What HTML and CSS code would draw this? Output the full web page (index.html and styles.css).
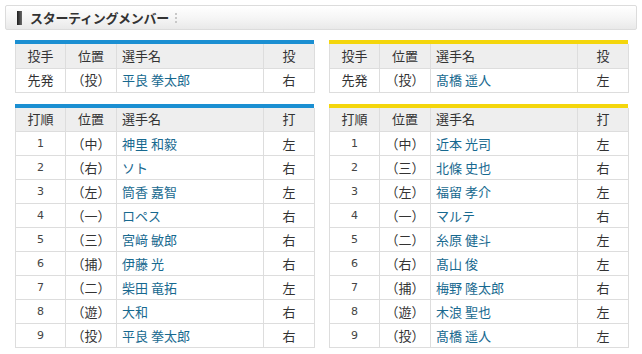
FILE: index.html
```html
<!DOCTYPE html>
<html lang="ja">
<head>
<meta charset="utf-8">
<link rel="stylesheet" href="styles.css">
</head>
<body>
<div class="page">
  <div class="title-bar">
    <span class="title-mark"></span>
    <h2 class="title">スターティングメンバー</h2>
    <span class="title-sep"></span>
  </div>

  <div class="grid">
    <div class="team team-blue">
      <table class="lineup">
        <colgroup><col class="c1"><col class="c2"><col class="c3"><col class="c4"></colgroup>
        <tr><th>投手</th><th>位置</th><th class="name">選手名</th><th>投</th></tr>
        <tr><td>先発</td><td>（投）</td><td class="name">平良 拳太郎</td><td>右</td></tr>
      </table>
    </div>
    <div class="team team-yellow">
      <table class="lineup">
        <colgroup><col class="c1"><col class="c2"><col class="c3"><col class="c4"></colgroup>
        <tr><th>投手</th><th>位置</th><th class="name">選手名</th><th>投</th></tr>
        <tr><td>先発</td><td>（投）</td><td class="name">髙橋 遥人</td><td>左</td></tr>
      </table>
    </div>

    <div class="team team-blue">
      <table class="lineup">
        <colgroup><col class="c1"><col class="c2"><col class="c3"><col class="c4"></colgroup>
        <tr><th>打順</th><th>位置</th><th class="name">選手名</th><th>打</th></tr>
        <tr><td class="num">1</td><td>（中）</td><td class="name">神里 和毅</td><td>左</td></tr>
        <tr><td class="num">2</td><td>（右）</td><td class="name">ソト</td><td>右</td></tr>
        <tr><td class="num">3</td><td>（左）</td><td class="name">筒香 嘉智</td><td>左</td></tr>
        <tr><td class="num">4</td><td>（一）</td><td class="name">ロペス</td><td>右</td></tr>
        <tr><td class="num">5</td><td>（三）</td><td class="name">宮﨑 敏郎</td><td>右</td></tr>
        <tr><td class="num">6</td><td>（捕）</td><td class="name">伊藤 光</td><td>右</td></tr>
        <tr><td class="num">7</td><td>（二）</td><td class="name">柴田 竜拓</td><td>左</td></tr>
        <tr><td class="num">8</td><td>（遊）</td><td class="name">大和</td><td>右</td></tr>
        <tr><td class="num">9</td><td>（投）</td><td class="name">平良 拳太郎</td><td>右</td></tr>
      </table>
    </div>
    <div class="team team-yellow">
      <table class="lineup">
        <colgroup><col class="c1"><col class="c2"><col class="c3"><col class="c4"></colgroup>
        <tr><th>打順</th><th>位置</th><th class="name">選手名</th><th>打</th></tr>
        <tr><td class="num">1</td><td>（中）</td><td class="name">近本 光司</td><td>左</td></tr>
        <tr><td class="num">2</td><td>（三）</td><td class="name">北條 史也</td><td>右</td></tr>
        <tr><td class="num">3</td><td>（左）</td><td class="name">福留 孝介</td><td>左</td></tr>
        <tr><td class="num">4</td><td>（一）</td><td class="name">マルテ</td><td>右</td></tr>
        <tr><td class="num">5</td><td>（二）</td><td class="name">糸原 健斗</td><td>左</td></tr>
        <tr><td class="num">6</td><td>（右）</td><td class="name">髙山 俊</td><td>左</td></tr>
        <tr><td class="num">7</td><td>（捕）</td><td class="name">梅野 隆太郎</td><td>右</td></tr>
        <tr><td class="num">8</td><td>（遊）</td><td class="name">木浪 聖也</td><td>左</td></tr>
        <tr><td class="num">9</td><td>（投）</td><td class="name">髙橋 遥人</td><td>左</td></tr>
      </table>
    </div>
  </div>
</div>
</body>
</html>
```

FILE: styles.css
```css
* { box-sizing: border-box; }
html, body { margin: 0; padding: 0; background: #fff; }
body {
  font-family: "Noto Sans CJK JP", "Noto Sans", sans-serif;
  color: #333;
  font-size: 13px;
}
.page { padding: 5px 5px 0 5px; }

.title-bar {
  width: 632px;
  height: 25px;
  border: 1px solid #dcdcdc;
  border-radius: 2px;
  background: linear-gradient(to bottom, #ffffff 0%, #f6f6f6 50%, #e9e9e9 100%);
  display: flex;
  align-items: center;
  padding-left: 11px;
}
.title-mark {
  width: 5px;
  height: 14px;
  background: linear-gradient(to right, #1e1e1e, #6a6a6a);
  margin-right: 8px;
}
.title {
  margin: 0;
  font-size: 13px;
  font-weight: bold;
  color: #333;
  letter-spacing: -0.3px;
  line-height: 1;
}
.title-sep {
  margin-left: 6px;
  width: 2px;
  height: 10px;
  border-left: 2px dotted #c8c8c8;
}

.grid {
  display: grid;
  grid-template-columns: 299px 299px;
  column-gap: 15px;
  row-gap: 11px;
  padding: 10px 0 0 10px;
}

.team { border-top: 4px solid #1b8fd2; }
.team-yellow { border-top-color: #f4d60c; }

.lineup {
  width: 299px;
  border-collapse: collapse;
  table-layout: fixed;
}
.c1 { width: 50px; }
.c2 { width: 51px; }
.c3 { width: 147px; }
.c4 { width: 51px; }

.lineup tr { height: 24px; }
.lineup th, .lineup td {
  padding: 0;
  border: 1px solid #dddddd;
  text-align: center;
  font-weight: normal;
  font-size: 13px;
  line-height: 22px;
  color: #333;
}
.lineup tr:first-child th { border-top: none; }
.lineup th { background: #eeeeee; }
.lineup .name { text-align: left; padding-left: 5px; }
.lineup td.name { color: #17698f; }
.lineup td.num { font-family: "DejaVu Sans", sans-serif; font-size: 11px; color: #444; }
```
